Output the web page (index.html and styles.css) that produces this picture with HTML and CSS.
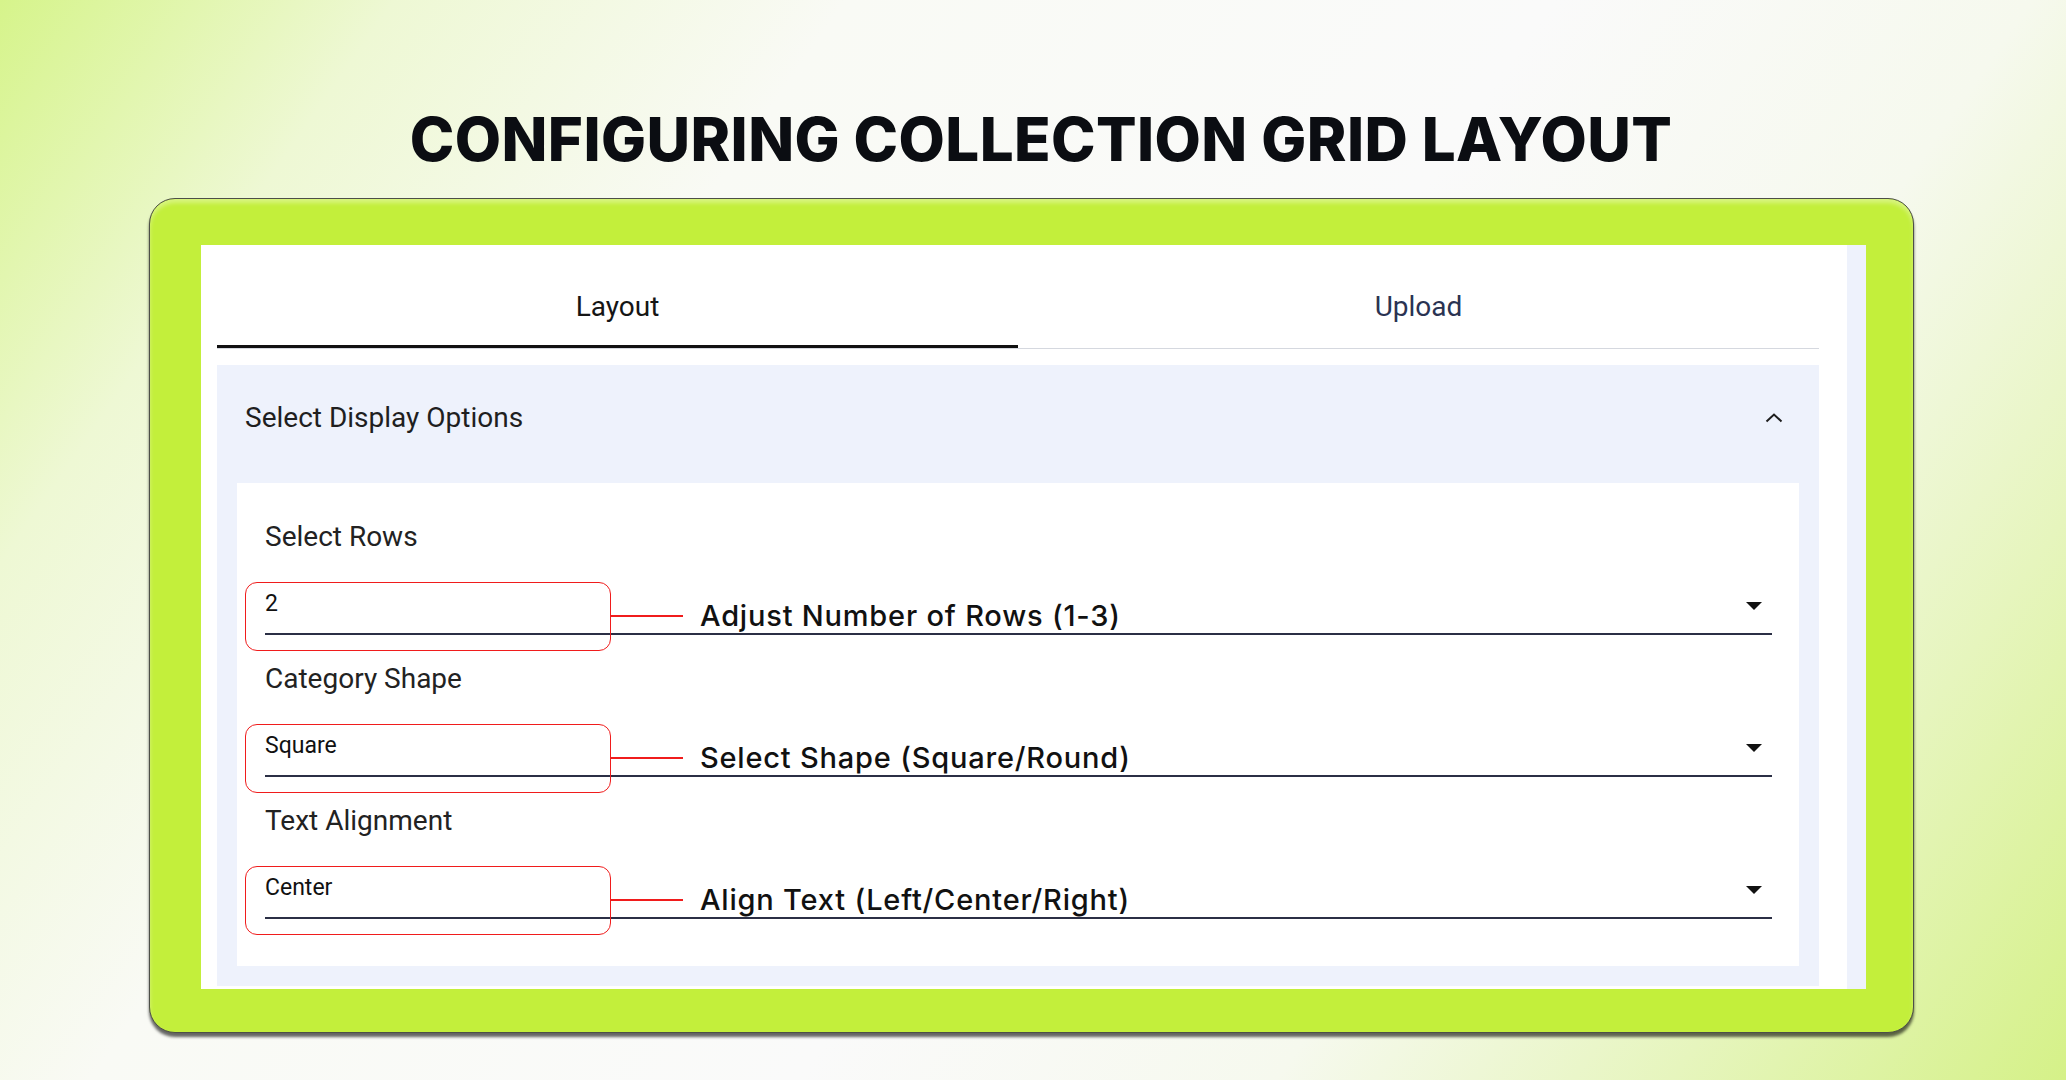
FILE: index.html
```html
<!DOCTYPE html>
<html lang="en">
<head>
  <meta charset="UTF-8">
  <meta name="viewport" content="width=device-width, initial-scale=1.0">
  <title>Configuring Collection Grid Layout</title>
  <link rel="stylesheet" href="styles.css">
</head>
<body>
  <div class="page">
    <h1 class="title">CONFIGURING COLLECTION GRID LAYOUT</h1>
    <div class="frame">
      <div class="panel">
        <div class="main">
          <div class="tabs">
            <div class="tab active">Layout</div>
            <div class="tab">Upload</div>
          </div>
          <div class="accordion">
            <div class="acc-head">
              <span>Select Display Options</span>
              <svg class="chevron" width="18" height="10" viewBox="0 0 18 10">
                <polyline points="1.5,8.5 9,1.5 16.5,8.5" fill="none" stroke="#1d1d1d" stroke-width="2"/>
              </svg>
            </div>
            <div class="acc-body">
              <div class="field">
                <div class="field-label">Select Rows</div>
                <div class="select">
                  <span class="value">2</span>
                  <span class="caret"></span>
                  <span class="callout-box"></span>
                  <div class="callout">
                    <span class="callout-line"></span>
                    <span class="callout-text">Adjust Number of Rows (1-3)</span>
                  </div>
                </div>
              </div>
              <div class="field">
                <div class="field-label">Category Shape</div>
                <div class="select">
                  <span class="value">Square</span>
                  <span class="caret"></span>
                  <span class="callout-box"></span>
                  <div class="callout">
                    <span class="callout-line"></span>
                    <span class="callout-text">Select Shape (Square/Round)</span>
                  </div>
                </div>
              </div>
              <div class="field">
                <div class="field-label">Text Alignment</div>
                <div class="select">
                  <span class="value">Center</span>
                  <span class="caret"></span>
                  <span class="callout-box"></span>
                  <div class="callout">
                    <span class="callout-line"></span>
                    <span class="callout-text">Align Text (Left/Center/Right)</span>
                  </div>
                </div>
              </div>
            </div>
          </div>
        </div>
        <div class="scroll-track"></div>
      </div>
    </div>
  </div>
</body>
</html>
```

FILE: styles.css
```css
body {
  margin: 0;
  font-family: Roboto, "Liberation Sans", sans-serif;
  color: #1f1f1f;
  background: linear-gradient(125deg, #d6f48b 0%, #eef8d4 14%, #f9faf5 30%, #fafafa 55%, #f6f9ee 72%, #e6f5bd 86%, #d5f188 100%);
  height: 100vh;
  overflow: hidden;
}
.page {
  padding-top: 109px;
}
.title {
  margin: 0;
  padding-left: 16px;
  text-align: center;
  font-family: Inter, "DejaVu Sans", sans-serif;
  font-weight: 800;
  font-size: 60px;
  line-height: 60px;
  letter-spacing: 0.4px;
  color: #0b0d12;
}
.frame {
  margin: 29px 0 0 149px;
  width: 1765px;
  height: 835px;
  box-sizing: border-box;
  padding: 46px 47px 43px 51px;
  background: #c3ef3b;
  border: 1px solid #4d4f48;
  border-radius: 26px;
  box-shadow: 0 4px 3px rgba(0, 0, 0, 0.6), inset 0 4px 4px rgba(255, 255, 255, 0.35);
}
.panel {
  display: flex;
  height: 744px;
  background: #fff;
  overflow: hidden;
}
.main {
  flex: 1;
  padding: 0 28px 0 16px;
}
.scroll-track {
  width: 19px;
  background: #eef2fc;
}
.tabs {
  display: flex;
  border-bottom: 1px solid #d5d8df;
}
.tab {
  flex: 1;
  text-align: center;
  padding: 45px 0 21px;
  font-size: 28px;
  line-height: 34px;
  color: #2a3352;
  border-bottom: 3px solid transparent;
}
.tab.active {
  color: #151515;
  border-bottom-color: #111;
}
.accordion {
  margin-top: 16px;
  background: #eef2fc;
  padding-bottom: 20px;
}
.acc-head {
  display: flex;
  align-items: center;
  justify-content: space-between;
  height: 118px;
  box-sizing: border-box;
  padding: 0 36px 12px 28px;
  font-size: 28px;
  line-height: 34px;
  color: #1f1f1f;
}
.acc-body {
  margin: 0 20px;
  background: #fff;
  padding: 37px 27px 47px 28px;
}
.field + .field {
  margin-top: 27px;
}
.field-label {
  font-size: 28px;
  line-height: 34px;
  color: #222;
  margin-bottom: 36px;
}
.select {
  position: relative;
  display: flex;
  align-items: center;
  height: 28px;
  padding-bottom: 15px;
  border-bottom: 2px solid #2b2f45;
}
.value {
  font-size: 23px;
  line-height: 28px;
  color: #111;
}
.caret {
  margin: 4px 10px 0 auto;
  border-left: 8px solid transparent;
  border-right: 8px solid transparent;
  border-top: 8px solid #111;
}
.callout-box {
  position: absolute;
  left: -20px;
  top: -8px;
  width: 366px;
  height: 69px;
  box-sizing: border-box;
  border: 1.5px solid #f01c1c;
  border-radius: 12px;
}
.callout {
  position: absolute;
  left: 346px;
  top: 9px;
  display: flex;
  align-items: center;
  height: 34px;
}
.callout-line {
  width: 72px;
  height: 1.5px;
  background: #f01c1c;
  margin-right: 17px;
}
.callout-text {
  font-family: Inter, "DejaVu Sans", sans-serif;
  font-weight: 500;
  font-size: 29px;
  line-height: 34px;
  letter-spacing: 0.8px;
  color: #111;
  white-space: nowrap;
}
```
